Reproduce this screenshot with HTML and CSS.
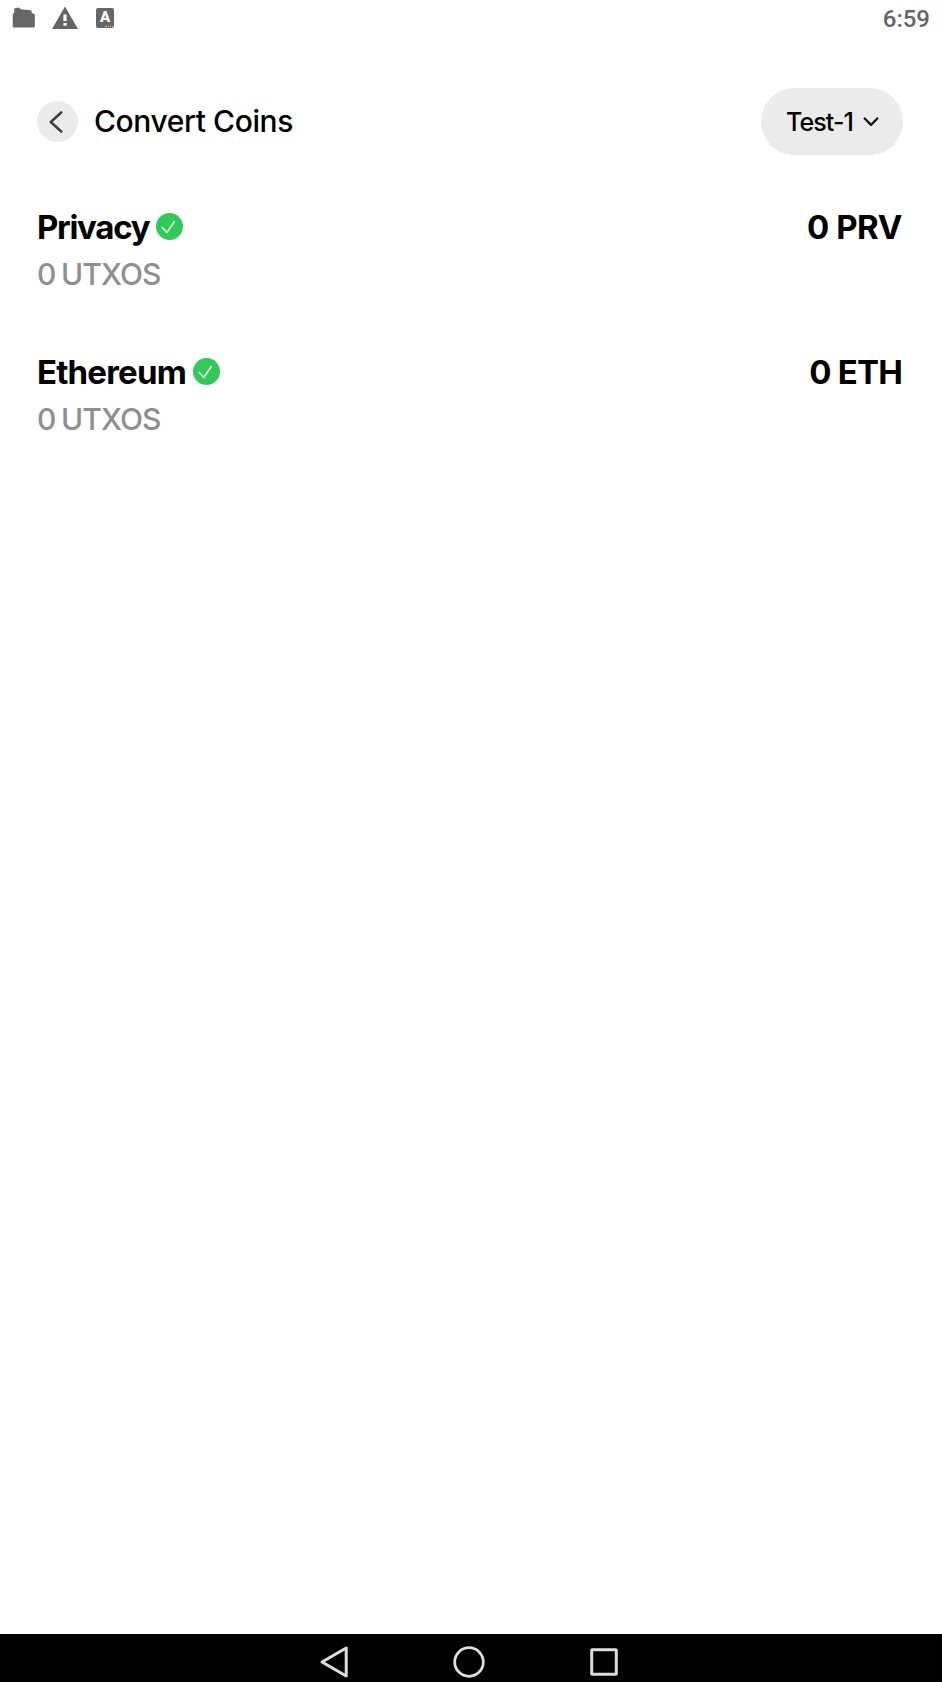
FILE: index.html
```html
<!DOCTYPE html>
<html lang="en">
<head>
    <meta charset="UTF-8">
    <meta name="viewport" content="width=device-width, initial-scale=1.0">
    <title>Convert Coins</title>
    <link rel="stylesheet" href="styles.css">
</head>
<body>

<div class="status-bar">
    <div class="status-icons">
        <svg width="24" height="24" viewBox="0 0 24 24">
            <path d="M1.5 21.5Q0.7 21.5 0.7 20.5V8.5Q0.7 7.4 2.2 7V3.2Q2.2 2.4 3 2.3L6.5 1.5L9 3.2L18.5 4.2Q19.6 4.4 19.7 5.5V7Q22.8 7.4 22.8 8.8V20.5Q22.8 21.5 21.8 21.5Z" fill="#666"/>
        </svg>
        <svg width="26" height="24" viewBox="0 0 26 24">
            <path d="M13 0.5L26 23H0Z" fill="#666"/>
            <path d="M11.4 8.5h3.2v6.5h-3.2zM11.4 17h3.2v2.8h-3.2z" fill="#fff"/>
        </svg>
        <div class="badge-a"><span>A</span><i></i></div>
    </div>
    <div class="time">6:59</div>
</div>

<div class="header">
    <button class="back">
        <svg width="14" height="22" viewBox="0 0 14 22">
            <path d="M12.2 1.5L1.8 11L12.2 20.5" fill="none" stroke="#404040" stroke-width="2.6" stroke-linecap="round" stroke-linejoin="round"/>
        </svg>
    </button>
    <h1>Convert Coins</h1>
    <button class="account">
        <span>Test-1</span>
        <svg width="16" height="10" viewBox="0 0 16 10">
            <path d="M1.7 1.5L8 7.9L14.3 1.5" fill="none" stroke="#111" stroke-width="2.3" stroke-linecap="round" stroke-linejoin="round"/>
        </svg>
    </button>
</div>

<div class="coins">
    <div class="coin">
        <div class="coin-row">
            <h2 class="privacy">Privacy</h2>
            <svg class="check" width="27" height="27" viewBox="0 0 27 27">
                <circle cx="13.5" cy="13.5" r="13.5" fill="#34c759"/>
                <path d="M6.3 14.5L10.8 19.5L18.2 8.7" fill="none" stroke="#d9f5df" stroke-width="1.7" stroke-linecap="round" stroke-linejoin="round"/>
            </svg>
            <div class="amount prv">0 PRV</div>
        </div>
        <p>0 UTXOS</p>
    </div>
    <div class="coin">
        <div class="coin-row">
            <h2 class="ethereum">Ethereum</h2>
            <svg class="check" width="27" height="27" viewBox="0 0 27 27">
                <circle cx="13.5" cy="13.5" r="13.5" fill="#34c759"/>
                <path d="M6.3 14.5L10.8 19.5L18.2 8.7" fill="none" stroke="#d9f5df" stroke-width="1.7" stroke-linecap="round" stroke-linejoin="round"/>
            </svg>
            <div class="amount eth">0 ETH</div>
        </div>
        <p>0 UTXOS</p>
    </div>
</div>

<div class="nav-bar">
    <svg width="30" height="34" viewBox="0 0 30 34">
        <path d="M27.2 3V31L3 17Z" fill="none" stroke="#dedede" stroke-width="3" stroke-linejoin="round"/>
    </svg>
    <svg width="34" height="34" viewBox="0 0 34 34">
        <circle cx="17" cy="17" r="14.3" fill="none" stroke="#dedede" stroke-width="2.8"/>
    </svg>
    <svg width="30" height="34" viewBox="0 0 30 34">
        <rect x="2.7" y="4.7" width="24.6" height="24.6" rx="0.5" fill="none" stroke="#dedede" stroke-width="3"/>
    </svg>
</div>

</body>
</html>
```

FILE: styles.css
```css
body {
    font-family: Inter, "Liberation Sans", sans-serif;
    background-color: #fff;
    color: #000;
    margin: 0;
    height: 100vh;
    display: flex;
    flex-direction: column;
    overflow: hidden;
}
h1, h2, p {
    margin: 0;
    white-space: nowrap;
}
svg {
    display: block;
    flex: none;
}
button {
    border: none;
    padding: 0;
    background-color: #ebebeb;
    font-family: inherit;
    color: #000;
    display: flex;
    align-items: center;
}
.status-bar {
    height: 38px;
    padding: 0 12px;
    display: flex;
    align-items: center;
    justify-content: space-between;
}
.status-icons {
    display: flex;
    align-items: center;
    gap: 16px;
    margin-top: -2px;
}
.badge-a {
    width: 18px;
    height: 20px;
    margin-left: 2px;
    border-radius: 2px;
    background-color: #666;
    color: #fff;
    font: 900 15px/19px Roboto, sans-serif;
    text-align: center;
    position: relative;
}
.badge-a i {
    position: absolute;
    right: 1px;
    bottom: 1px;
    width: 8px;
    border-bottom: 1px dotted #ccc;
}
.time {
    font: 500 24px/38px Roboto, sans-serif;
    color: #666;
}
.header {
    height: 67px;
    margin-top: 50px;
    padding: 0 39px 0 37px;
    display: flex;
    align-items: center;
}
.back {
    width: 41px;
    height: 41px;
    border-radius: 50%;
    justify-content: center;
    padding-right: 3px;
}
h1 {
    font-size: 30px;
    line-height: 36px;
    font-weight: 550;
    letter-spacing: -0.4px;
    margin: 0 0 2px 16px;
}
.account {
    width: 142px;
    height: 67px;
    border-radius: 34px;
    margin-left: auto;
    padding-left: 25px;
    gap: 10px;
    font-size: 25px;
    font-weight: 500;
    letter-spacing: -0.9px;
}
.coins {
    flex: 1;
    padding: 52px 40px 0 37px;
}
.coin {
    height: 145px;
}
.coin-row {
    height: 40px;
    display: flex;
    align-items: center;
}
h2, .amount {
    font-size: 33px;
    line-height: 40px;
    font-weight: 700;
    letter-spacing: -0.8px;
}
.privacy {
    letter-spacing: -1.3px;
}
.check {
    margin: 0 0 2px 7px;
}
.amount {
    margin-left: auto;
}
.prv {
    letter-spacing: -0.4px;
}
.coin p {
    font-size: 30px;
    line-height: 36px;
    margin-top: 9px;
    font-weight: 450;
    letter-spacing: -0.9px;
    word-spacing: -1.5px;
    color: #8e8e93;
}
.nav-bar {
    height: 41px;
    background-color: #000;
    display: flex;
    align-items: center;
    justify-content: center;
    gap: 103px;
    padding: 7px 4px 0 0;
}
```
